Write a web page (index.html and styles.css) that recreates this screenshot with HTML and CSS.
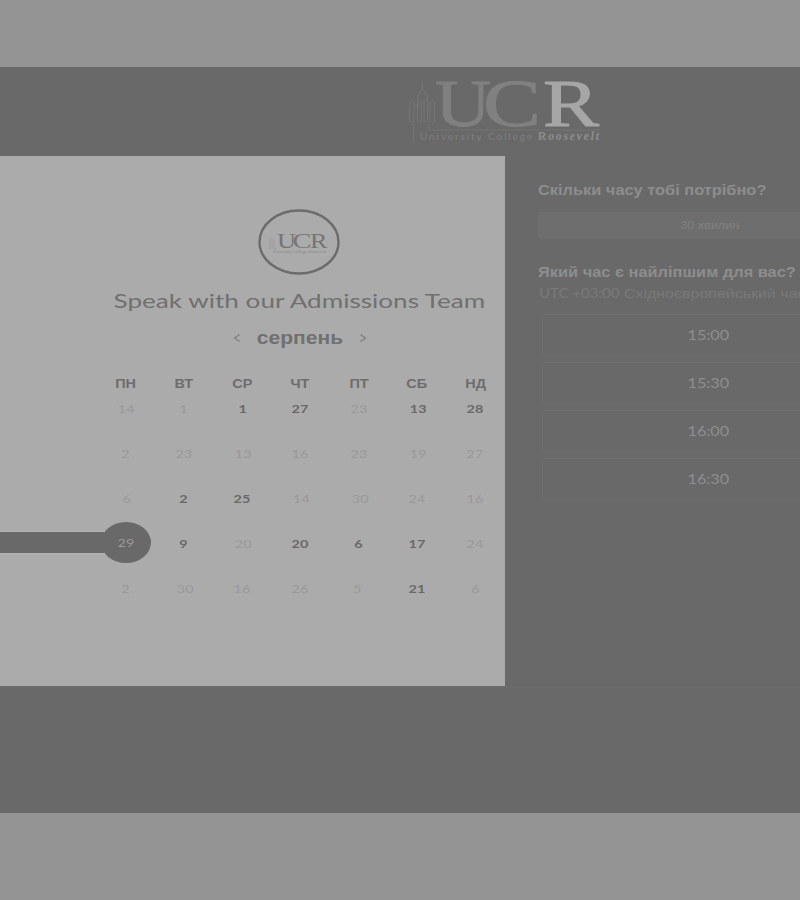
FILE: index.html
```html
<!DOCTYPE html>
<html lang="uk">
<head>
<meta charset="utf-8">
<title>UCR – Speak with our Admissions Team</title>
<link rel="stylesheet" href="styles.css">
</head>
<body>
<main class="page">
  <header class="header">
    <svg class="logo" width="200" height="78" viewBox="0 0 200 78">
      <g class="tower">
        <path d="M22.500 16v6M17.500 34v-5l5-7 5 7v5M17.500 34q2-2 3.500 0v20q-1.500 3-3.500 0zM24 34q2-2 3.500 0v20q-1.500 3-3.500 0zM9.500 36q2.500-3 4.500 0v18q-2 3-4.500 0zM30 36q2-3 4.500 0v18q-2.500 3-4.500 0zM14 39h3M28 39h2M13.500 57v18M29 57v6h171"/>
      </g>
      <g class="logo-letters">
        <text x="35" y="59" font-size="68" textLength="56" lengthAdjust="spacingAndGlyphs">U</text>
        <text x="83" y="59" font-size="68" textLength="58" lengthAdjust="spacingAndGlyphs">C</text>
        <text class="logo-r" x="143" y="59" font-size="68" textLength="56" lengthAdjust="spacingAndGlyphs">R</text>
      </g>
      <text class="logo-sub" x="20" y="73" textLength="112" lengthAdjust="spacing">University College</text>
      <text class="logo-name" x="138" y="73" textLength="61" lengthAdjust="spacing"><tspan class="upright">R</tspan>oosevelt</text>
    </svg>
  </header>

  <div class="body">
    <section class="calendar">
      <svg class="badge" width="82" height="66" viewBox="0 0 82 66">
        <ellipse cx="41" cy="33" rx="39.500" ry="31.500"/>
        <path d="M12 30v8M14 28v11M16 30v8M11 39h8"/>
        <g class="badge-letters">
          <text x="19" y="38.500" font-size="21.500" textLength="19" lengthAdjust="spacingAndGlyphs">U</text>
          <text x="34.500" y="38.500" font-size="21.500" textLength="19" lengthAdjust="spacingAndGlyphs">C</text>
          <text x="52" y="38.500" font-size="21.500" textLength="17.500" lengthAdjust="spacingAndGlyphs">R</text>
        </g>
        <text class="badge-sub" x="15" y="43.500" textLength="53" lengthAdjust="spacingAndGlyphs">University College Roosevelt</text>
      </svg>
      <h1 class="title"><span>Speak with our Admissions Team</span></h1>
      <div class="month">
        <svg width="8" height="10" viewBox="0 0 8 10"><path d="M6.500 1.500 1.500 5l5 3.500"/></svg>
        <span class="month-name"><span>серпень</span></span>
        <svg width="8" height="10" viewBox="0 0 8 10"><path d="M1.500 1.500l5 3.500-5 3.500"/></svg>
      </div>
      <div class="grid weekdays">
        <span>ПН</span><span>ВТ</span><span>СР</span><span>ЧТ</span><span>ПТ</span><span>СБ</span><span>НД</span>
      </div>
      <div class="grid days">
        <span class="r">14</span><span>1</span><b class="r">1</b><b>27</b><span>23</span><b class="r">13</b><b>28</b>
        <span>2</span><span>23</span><span class="r">13</span><span>16</span><span>23</span><span class="r">19</span><span>27</span>
        <span class="r">6</span><b>2</b><b>25</b><span class="r">14</span><span class="r">30</span><span>24</span><span>16</span>
        <div class="selected"><span>29</span></div><b>9</b><span class="r">20</span><b>20</b><b>6</b><b>17</b><span>24</span>
        <span>2</span><span class="r">30</span><span>16</span><span>26</span><span class="l">5</span><b>21</b><span>6</span>
      </div>
    </section>

    <section class="times">
      <h2 class="q1"><span>Скільки часу тобі потрібно?</span></h2>
      <div class="duration"><span>30 хвилин</span></div>
      <h2 class="q2"><span>Який час є найліпшим для вас?</span></h2>
      <p class="zone"><span class="utc">UTC +03:00</span><span class="zname">Східноєвропейський час</span></p>
      <div class="slots">
        <div class="slot"><span>15:00</span></div>
        <div class="slot"><span>15:30</span></div>
        <div class="slot"><span>16:00</span></div>
        <div class="slot"><span>16:30</span></div>
      </div>
    </section>
  </div>
  <footer class="footer"></footer>
</main>
</body>
</html>
```

FILE: styles.css
```css
* { box-sizing: border-box; }
body {
  margin: 0;
  height: 900px;
  padding-top: 67px;
  background: #949494;
  font-family: "Liberation Sans", sans-serif;
  overflow: hidden;
}
h1, h2, p { margin: 0; white-space: nowrap; }
h1 span, h2 span, .zone span, .duration span, .slot span, .month-name span { display: inline-block; }
.page { width: 800px; height: 746px; background: #696969; overflow: hidden; }

.header { height: 89px; padding: 0 0 0 400px; }
.logo { display: block; overflow: visible; }
.tower path { fill: none; stroke: #757575; stroke-width: 1.1; }
.logo-letters { font-family: "Liberation Serif", serif; fill: #808080; stroke: #808080; stroke-width: .8; }
.logo-r { fill: #a6a6a6; stroke: #a6a6a6; stroke-width: 1; }
.logo-sub { font: 10px "Lato", sans-serif; fill: #7e7e7e; }
.logo-name { font: italic bold 11.5px "Liberation Serif", serif; fill: #8e8e8e; }
.upright { font-style: normal; }

.body { display: flex; height: 530px; }
.calendar {
  flex: 0 0 504.500px;
  height: 529.500px;
  padding-left: 96px;
  background: #ababab;
  display: flex;
  flex-direction: column;
  align-items: center;
}
.badge { margin: 53px 0 0 -2px; flex: none; }
.badge ellipse { fill: none; stroke: #6c6c6c; stroke-width: 2.4; }
.badge path { fill: none; stroke: #9a9a9a; stroke-width: .8; }
.badge-letters { font-family: "Liberation Serif", serif; fill: #757575; }
.badge-sub { font: 4px "Liberation Serif", serif; fill: #888; }
.title {
  margin: 12px 0 0 -1px;
  height: 26px;
  font: 400 20px/26px "Lato", sans-serif;
  color: #707070;
}
.title span { transform: scaleX(1.305); }
.month { display: flex; align-items: center; height: 24px; margin: 13px 0 0 -1px; }
.month svg { fill: none; stroke: #7d7d7d; stroke-width: 1.2; }
.month-name { width: 118px; text-align: center; font-weight: 700; font-size: 18px; line-height: 24px; color: #707070; }
.month-name span { transform: scaleX(1.17); }
.grid { display: grid; grid-template-columns: repeat(7, 58.330px); justify-items: center; align-items: center; }
.weekdays { margin-top: 24px; height: 20px; font-weight: 700; font-size: 12px; color: #6d6d6d; }
.weekdays span { transform: scaleX(1.2); }
.days { margin-top: -7.500px; grid-auto-rows: 44.800px; font: 12px "Lato", sans-serif; color: #999; }
.days > span, .days > b { transform: scaleX(1.2); }
.days b { font-weight: 700; color: #696969; }
.days .r { padding-left: 2px; }
.days .l { padding-right: 2px; }
.selected {
  position: relative;
  width: 50px;
  height: 41px;
  top: -0.500px;
  left: 0.500px;
  border-radius: 50%;
  background: #696969;
  color: #999;
  display: flex;
  align-items: center;
  justify-content: center;
}
.selected::before {
  content: "";
  position: absolute;
  right: 42px;
  top: 10px;
  width: 110px;
  height: 21px;
  background: #696969;
  box-shadow: 0 0 2px 1px #b5b5b5;
  clip-path: inset(-3px 4px -3px 0);
}
.selected span { transform: scaleX(1.2); position: relative; }

.times { flex: 0 0 376px; padding: 24px 0 0 33.500px; color: #8d8d8d; }
.times h2 { font-size: 14px; line-height: 20px; }
.times h2 span, .zone span { transform-origin: left; }
.q1 span { transform: scaleX(1.17); }
.q2 span { transform: scaleX(1.17); }
.duration {
  height: 27px;
  margin-top: 12px;
  border-radius: 3px;
  background: #6e6e6e;
  border: 1px solid #707070;
  text-align: center;
  font-size: 11px;
  line-height: 25px;
  color: #818181;
}
.duration span { transform: scaleX(1.15); }
.q2 { margin-top: 23px; }
.zone { display: flex; padding-left: 1px; font: 12.500px/20px "Lato", "Liberation Sans", sans-serif; color: #797979; margin-top: 2px; }
.utc { width: 84.500px; transform: scaleX(1.2); flex: none; }
.zname { font-family: "Liberation Sans", sans-serif; transform: scaleX(1.275); }
.slots { display: grid; grid-auto-rows: 42px; gap: 6px; padding: 10px 4px 0; }
.slot {
  border: 1px solid #6e6e6e;
  border-radius: 2px;
  text-align: center;
  font: 13.500px/40px "Lato", sans-serif;
  color: #8e8e8e;
}
.slot span { transform: scaleX(1.2); margin-right: 2px; }
.footer { height: 127px; border-top: 2px solid #6c6c6c; }
```
